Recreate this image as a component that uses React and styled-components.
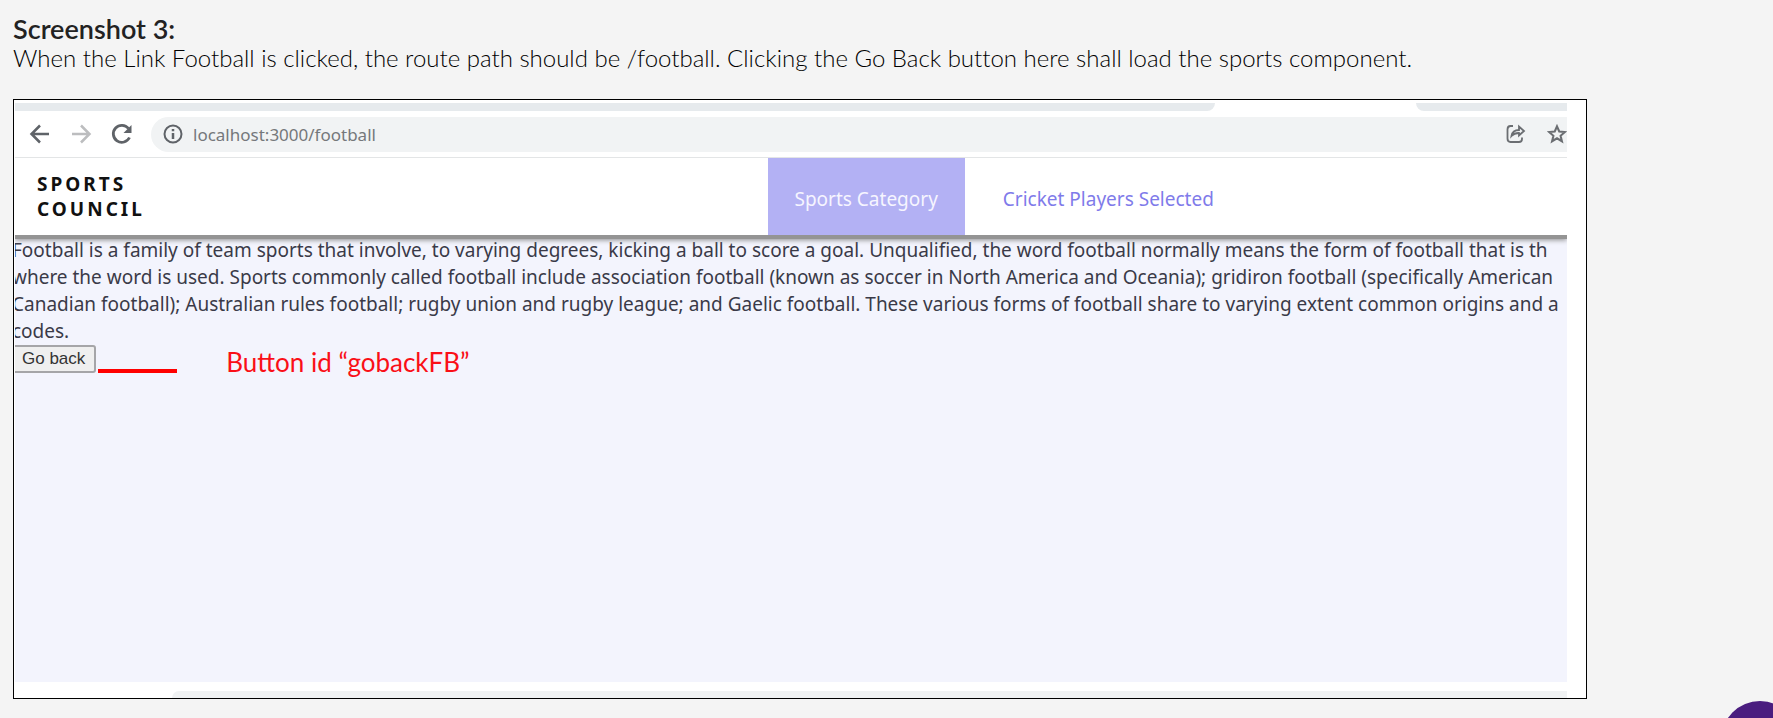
import React from "react";
import styled, { createGlobalStyle } from "styled-components";

const GlobalStyle = createGlobalStyle`
  * { box-sizing: border-box; }
  body { margin: 0; background: #f4f4f4; overflow: hidden; }
`;

const Page = styled.main`
  padding: 15px 186px 20px 13px;
  color: #222;
  font-family: Lato, sans-serif;
`;

const Title = styled.h2`
  margin: 0;
  font-size: 27px;
  line-height: 28px;
  font-weight: 600;
`;

const Lead = styled.p`
  margin: 0 0 27px;
  color: #000;
  font-size: 24px;
  line-height: 29px;
  font-weight: 300;
  font-variant-ligatures: none;
  white-space: nowrap;
`;

const Frame = styled.figure`
  margin: 0;
  padding: 3px 19px 0 1px;
  border: 1px solid #000;
  background: #fff;
`;

const Screen = styled.div`
  overflow: hidden;
  font-family: "Noto Sans", sans-serif;
`;

const TabStrip = styled.div`
  display: grid;
  grid-template-columns: 1201fr 201fr 151fr;
  height: 8px;
`;

const TabEdge = styled.div`
  grid-column: ${(p) => p.$column};
  background: #e6eaed;
  border-radius: ${(p) => (p.$column === 1 ? "0 0 8px 0" : "0 0 0 8px")};
`;

const Toolbar = styled.div`
  display: flex;
  align-items: center;
  height: 47px;
  padding-left: 13px;
  border-bottom: 1px solid #e4e6e7;
`;

const ToolButton = styled.button`
  display: flex;
  margin: 0 17px 0 0;
  padding: 0;
  border: 0;
  background: none;
  color: ${(p) => (p.$faint ? "#bcbdbf" : "#5f6368")};
`;

const AddressBar = styled.div`
  display: flex;
  flex: 1;
  align-items: center;
  height: 35px;
  padding-left: 10px;
  border-radius: 18px 0 0 18px;
  background: #f1f3f4;
  color: #5f6368;
`;

const Address = styled.input`
  flex: 1;
  min-width: 0;
  margin: 0 0 0 8px;
  padding: 0;
  border: 0;
  outline: 0;
  background: none;
  color: #75787b;
  font: 17px "Noto Sans", sans-serif;
`;

const BarIcon = styled.button`
  display: flex;
  margin: 0 0 0 20px;
  padding: 0;
  border: 0;
  background: none;
  color: #6b6e72;
`;

const Nav = styled.nav`
  position: relative;
  display: grid;
  grid-template-columns: 753fr 800fr;
  height: 77px;
  background: #fff;
  box-shadow: 0 4px 0 #949494, 0 5px 5px #8c8c8c;
`;

const Brand = styled.div`
  align-self: center;
  width: 120px;
  margin-left: 22px;
  color: #111;
  font-size: 19px;
  line-height: 25px;
  font-weight: 700;
  letter-spacing: 3px;
`;

const Links = styled.div`
  display: flex;
`;

const NavLink = styled.a`
  display: flex;
  align-items: center;
  justify-content: center;
  padding: 4px ${(p) => (p.$active ? 27 : 38)}px 0;
  background: ${(p) => (p.$active ? "#b3b1f4" : "transparent")};
  color: ${(p) => (p.$active ? "#f6f5ff" : "#7f7bea")};
  font-size: 19px;
  white-space: nowrap;
  text-decoration: none;
`;

const Content = styled.section`
  min-height: 447px;
  padding-top: 2px;
  background: #f3f4fd;
  color: #3a3a48;
`;

const Copy = styled.p`
  margin: 0 0 0 -3px;
  font-size: 19px;
  line-height: 27px;
  white-space: nowrap;
`;

const Line = styled.span`
  display: block;
`;

const ActionRow = styled.div`
  display: flex;
  align-items: flex-start;
`;

const GoBack = styled.button`
  height: 28px;
  margin-left: -4px;
  padding: 0 9px;
  border: 2px solid #a5a5a8;
  border-radius: 3px;
  background: #efefef;
  color: #333;
  font: 17px "Liberation Sans", Arial, sans-serif;
`;

const Marker = styled.div`
  width: 79px;
  height: 4px;
  margin: 24px 49px 0 2px;
  background: #f00;
`;

const Note = styled.span`
  color: #fa0f17;
  font: 26px/34px Lato, sans-serif;
  white-space: nowrap;
`;

const NextTab = styled.div`
  height: 16px;
  padding: 9px 0 0 157px;
`;

const NextBar = styled.div`
  height: 7px;
  border-radius: 14px 0 0 0;
  background: #f0f2f3;
`;

const ChatButton = styled.button`
  position: fixed;
  right: -26px;
  bottom: -61px;
  width: 78px;
  height: 78px;
  border: 0;
  border-radius: 50%;
  background: #4a1d7f;
`;

const lines = [
  "Football is a family of team sports that involve, to varying degrees, kicking a ball to score a goal. Unqualified, the word football normally means the form of football that is th",
  "where the word is used. Sports commonly called football include association football (known as soccer in North America and Oceania); gridiron football (specifically American",
  "Canadian football); Australian rules football; rugby union and rugby league; and Gaelic football. These various forms of football share to varying extent common origins and a",
  "codes.",
];

function Icon({ children, size = 24, stroke = 2 }) {
  return (
    <svg width={size} height={size} viewBox="0 0 24 24" fill="none" stroke="currentColor" strokeWidth={stroke} aria-hidden="true">
      {children}
    </svg>
  );
}

export default function App() {
  return (
    <>
      <GlobalStyle />
      <Page>
        <Title>Screenshot 3:</Title>
        <Lead>
          When the Link Football is clicked, the route path should be /football. Clicking the Go Back button here shall load the sports component.
        </Lead>
        <Frame>
          <Screen>
            <TabStrip>
              <TabEdge $column={1} />
              <TabEdge $column={3} />
            </TabStrip>
            <Toolbar>
              <ToolButton aria-label="Back">
                <Icon stroke={2.5}><path d="M21 12H4M12 3.500L3.500 12l8.500 8.500" /></Icon>
              </ToolButton>
              <ToolButton aria-label="Forward" $faint>
                <Icon stroke={2.5}><path d="M3 12h17M12 3.500l8.500 8.500-8.500 8.500" /></Icon>
              </ToolButton>
              <ToolButton aria-label="Reload">
                <Icon>
                  <path d="M19.500 15.500A8.500 8.500 0 1 1 18.500 6.500" strokeWidth="2.800" />
                  <path d="M21.500 3v8h-8z" fill="currentColor" stroke="none" />
                </Icon>
              </ToolButton>
              <AddressBar>
                <Icon>
                  <circle cx="12" cy="12" r="8.500" />
                  <path d="M12 11v6M12 7v2.300" strokeWidth="2.500" />
                </Icon>
                <Address aria-label="Address" defaultValue="localhost:3000/football" />
                <BarIcon aria-label="Share">
                  <Icon stroke={1.8}>
                    <path d="M10 4H7.500Q4.500 4 4.500 7.500v9q0 3.500 3 3.500h8.500q3 0 3-3v-1.500" />
                    <path d="M8.500 14q1-6 7.500-6V4.500l5 4.500-5 4.500V11q-4.500-.200-7.500 3z" />
                  </Icon>
                </BarIcon>
                <BarIcon aria-label="Bookmark">
                  <Icon size={20} stroke={2.5}>
                    <path d="M12 2.800l2.700 6.200 6.800.600-5.200 4.500 1.600 6.600-5.900-3.500-5.900 3.500 1.600-6.600-5.200-4.500 6.800-.600z" />
                  </Icon>
                </BarIcon>
              </AddressBar>
            </Toolbar>
            <Nav>
              <Brand>SPORTS COUNCIL</Brand>
              <Links>
                <NavLink href="#sports" $active>Sports Category</NavLink>
                <NavLink href="#cricket">Cricket Players Selected</NavLink>
              </Links>
            </Nav>
            <Content>
              <Copy>
                {lines.map((line) => (
                  <Line key={line}>{line}</Line>
                ))}
              </Copy>
              <ActionRow>
                <GoBack id="gobackFB">Go back</GoBack>
                <Marker />
                <Note>Button id “gobackFB”</Note>
              </ActionRow>
            </Content>
            <NextTab>
              <NextBar />
            </NextTab>
          </Screen>
        </Frame>
      </Page>
      <ChatButton aria-label="Open chat" />
    </>
  );
}
